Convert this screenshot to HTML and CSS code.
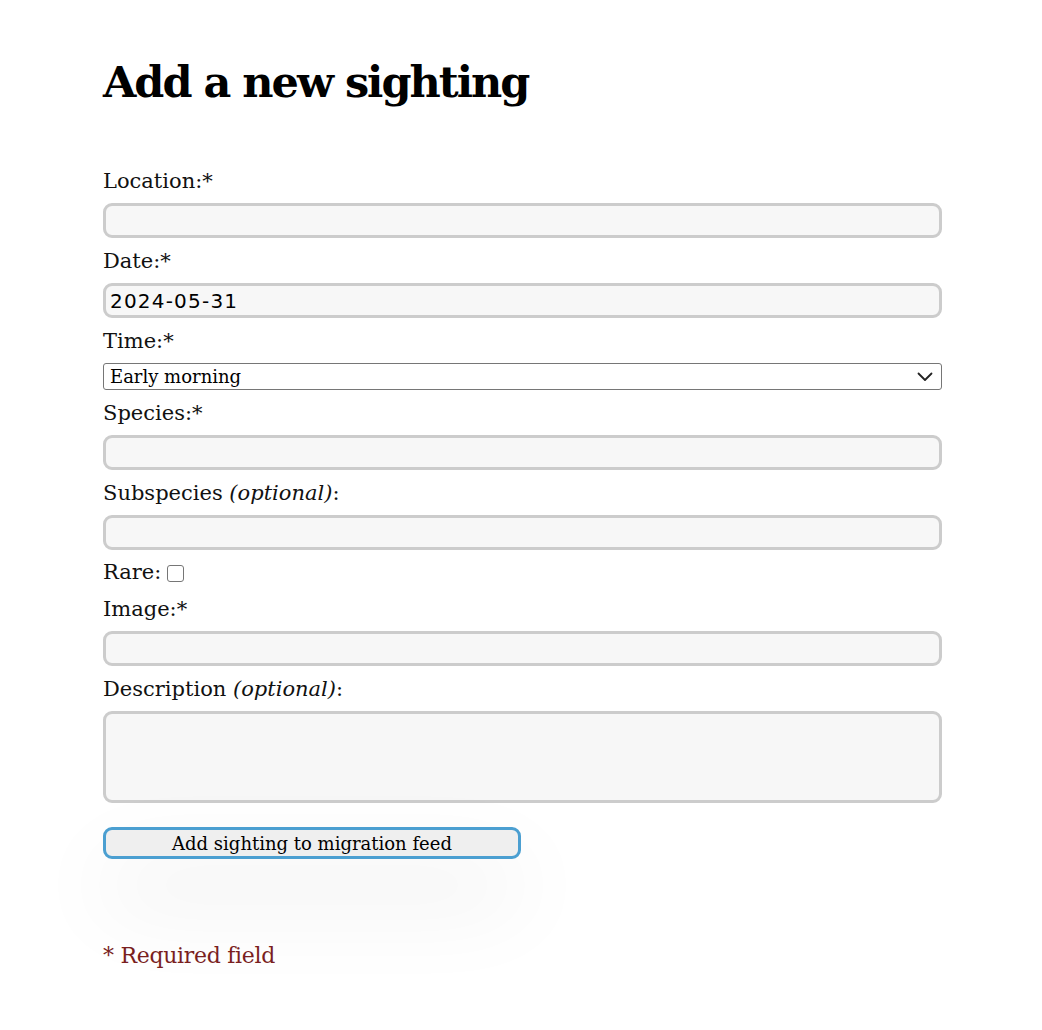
FILE: index.html
```html
<!DOCTYPE html>
<html lang="en">
<head>
<meta charset="utf-8">
<title>Add a new sighting</title>
<link rel="stylesheet" href="styles.css">
</head>
<body>
<main class="page">
  <h1 class="title">Add a new sighting</h1>
  <form class="form">
    <label class="field-label" for="location">Location:*</label>
    <input class="text-input" id="location" type="text">

    <label class="field-label" for="date">Date:*</label>
    <input class="text-input date-input" id="date" type="text" value="2024-05-31">

    <label class="field-label" for="time">Time:*</label>
    <div class="select-wrap">
      <select class="select" id="time">
        <option>Early morning</option>
      </select>
      <svg class="chevron" width="16" height="10" viewBox="0 0 16 10" aria-hidden="true">
        <path d="M1.5 1.5 L8 8 L14.5 1.5" fill="none" stroke="#222" stroke-width="1.8" stroke-linecap="round" stroke-linejoin="round"/>
      </svg>
    </div>

    <label class="field-label" for="species">Species:*</label>
    <input class="text-input" id="species" type="text">

    <label class="field-label" for="subspecies">Subspecies <em>(optional)</em>:</label>
    <input class="text-input" id="subspecies" type="text">

    <label class="field-label rare-label" for="rare">Rare: <input class="checkbox" id="rare" type="checkbox"></label>

    <label class="field-label" for="image">Image:*</label>
    <input class="text-input" id="image" type="text">

    <label class="field-label" for="description">Description <em>(optional)</em>:</label>
    <textarea class="text-area" id="description"></textarea>

    <button class="submit" type="button">Add sighting to migration feed</button>
  </form>
  <p class="note">* Required field</p>
</main>
</body>
</html>
```

FILE: styles.css
```css
html, body {
  margin: 0;
  padding: 0;
  background: #ffffff;
}

body {
  min-height: 100vh;
  font-family: "DejaVu Serif", "Liberation Serif", serif;
  color: #111111;
}

.page {
  width: 839px;
  margin-left: 103px;
  padding-top: 54px;
  padding-bottom: 40px;
}

.title {
  margin: 0;
  font-size: 43px;
  line-height: 56px;
  font-weight: 700;
  letter-spacing: -2px;
  color: #000;
}

.form {
  display: flex;
  flex-direction: column;
  align-items: stretch;
  margin-top: 56px;
}

.field-label {
  display: block;
  font-size: 21px;
  line-height: 30px;
  margin: 8px 0 7px;
  color: #111;
}

.form .field-label:first-child {
  margin-top: 0;
}

.field-label em {
  font-style: italic;
}

.text-input {
  box-sizing: border-box;
  height: 35px;
  width: 100%;
  margin: 0;
  padding: 0 4px;
  border: 3px solid #cccccc;
  border-radius: 9px;
  background: #f7f7f7;
  font-family: "DejaVu Sans", "Noto Sans", sans-serif;
  font-size: 20px;
  letter-spacing: 1.2px;
  color: #000;
}

.select-wrap {
  position: relative;
  height: 27px;
}

.select {
  box-sizing: border-box;
  appearance: none;
  -webkit-appearance: none;
  width: 100%;
  height: 27px;
  margin: 0;
  padding: 0 6px;
  border: 1px solid #767676;
  border-radius: 3px;
  background: #fff;
  font-family: "DejaVu Serif", "Liberation Serif", serif;
  font-size: 18px;
  color: #000;
}

.chevron {
  position: absolute;
  right: 9px;
  top: 9px;
  pointer-events: none;
}

.form .rare-label {
  display: flex;
  align-items: center;
  gap: 6px;
  line-height: 28px;
  margin-bottom: 0;
}

.checkbox {
  appearance: none;
  -webkit-appearance: none;
  box-sizing: border-box;
  width: 17px;
  height: 17px;
  margin: 2px 0 0;
  border: 1px solid #767676;
  border-radius: 3px;
  background: #fff;
}

.text-area {
  box-sizing: border-box;
  display: block;
  width: 100%;
  height: 92px;
  margin: 0;
  border: 3px solid #cccccc;
  border-radius: 9px;
  background: #f7f7f7;
  resize: none;
}

.submit {
  align-self: flex-start;
  box-sizing: border-box;
  width: 418px;
  height: 32px;
  margin-top: 24px;
  padding: 0;
  border: 3px solid #4b9fd1;
  border-radius: 9px;
  background: #efefef;
  font-family: "DejaVu Serif", "Liberation Serif", serif;
  font-size: 18px;
  color: #000;
  box-shadow: 0 42px 90px rgba(0, 0, 0, 0.09);
}

.note {
  margin: 82px 0 0;
  font-size: 22px;
  line-height: 30px;
  letter-spacing: -0.3px;
  color: #7a1f1f;
}
```
